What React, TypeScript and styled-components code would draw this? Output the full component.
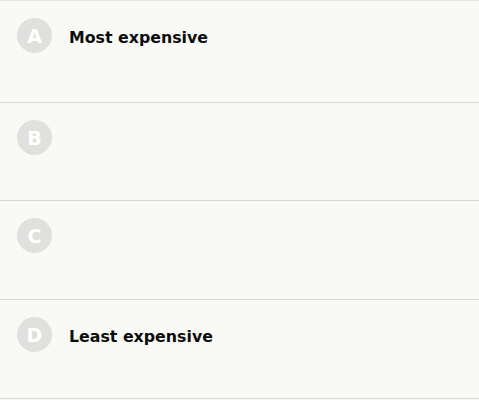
import React from 'react';
import styled, { createGlobalStyle } from 'styled-components';

const GlobalStyle = createGlobalStyle`
    html, body {
        margin: 0;
        padding: 0;
        background: #f9f9f5;
    }
`;

const List = styled.div`
    width: 479px;
    border-top: 1px solid #e4e4de;
    font-family: 'DejaVu Sans', Verdana, sans-serif;
`;

const Row = styled.div<{ h: number }>`
    display: flex;
    align-items: flex-start;
    height: ${props => props.h}px;
    padding: 17px 0 0 17px;
    box-sizing: border-box;
    border-bottom: 1px solid #d6d6ce;
    background: #f9f9f5;
`;

const Badge = styled.div`
    width: 35px;
    height: 35px;
    border-radius: 50%;
    background: #e0e0de;
    color: #ffffff;
    font-weight: bold;
    font-size: 19px;
    display: flex;
    align-items: center;
    justify-content: center;
    flex-shrink: 0;
`;

const Label = styled.div`
    margin-left: 17px;
    padding-top: 2px;
    line-height: 35px;
    font-size: 15.8px;
    font-weight: bold;
    color: #0c0c0c;
`;

const rows = [
    { letter: 'A', label: 'Most expensive', h: 102 },
    { letter: 'B', label: '', h: 98 },
    { letter: 'C', label: '', h: 99 },
    { letter: 'D', label: 'Least expensive', h: 99 },
];

export default function App() {
    return (
        <>
            <GlobalStyle />
            <List>
                {rows.map(r => (
                    <Row key={r.letter} h={r.h}>
                        <Badge>{r.letter}</Badge>
                        {r.label && <Label>{r.label}</Label>}
                    </Row>
                ))}
            </List>
        </>
    );
}
